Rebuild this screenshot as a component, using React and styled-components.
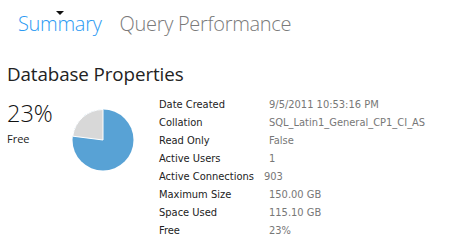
import React from "react";
import styled, { createGlobalStyle } from "styled-components";

const Global = createGlobalStyle`
  html, body { margin: 0; padding: 0; background: #fff; }
  body { font-family: "Open Sans", sans-serif; }
`;

const Page = styled.div`
  width: 476px;
  height: 242px;
  overflow: hidden;
  display: flex;
  flex-direction: column;
`;

const Tabs = styled.div`
  display: flex;
  gap: 18px;
  padding: 10px 0 0 18px;
  height: 38px;
  box-sizing: border-box;
`;

const Tab = styled.div`
  position: relative;
  font-family: "Open Sans", sans-serif;
  font-weight: 300;
  font-size: 20px;
  line-height: 28px;
  color: ${(p) => (p.$active ? "#2b9af3" : "#7a7a7a")};
  letter-spacing: -0.3px;
`;

const Caret = styled.span`
  position: absolute;
  top: 1px;
  left: 50%;
  transform: translateX(-50%);
  width: 0;
  height: 0;
  border-left: 4.5px solid transparent;
  border-right: 4.5px solid transparent;
  border-top: 4px solid #111;
`;

const Title = styled.h1`
  margin: 24px 0 0 7px;
  font-family: "Open Sans", sans-serif;
  font-weight: 400;
  font-size: 18.8px;
  line-height: 24px;
  color: #222;
  letter-spacing: -0.1px;
`;

const Body = styled.div`
  display: flex;
  margin-top: 9px;
  padding-left: 7px;
`;

const Stat = styled.div`
  width: 64px;
  padding-top: 5px;
  display: flex;
  flex-direction: column;
`;

const Big = styled.div`
  font-family: "Open Sans", sans-serif;
  font-weight: 300;
  font-size: 23.5px;
  line-height: 26px;
  color: #111;
`;

const Small = styled.div`
  font-family: "Open Sans", sans-serif;
  font-size: 11px;
  line-height: 14px;
  margin-top: 6px;
  color: #222;
`;

const PieBox = styled.div`
  width: 88px;
  padding-top: 13.5px;
  padding-left: 1px;
  box-sizing: border-box;
  svg { display: block; }
`;

const Table = styled.div`
  display: grid;
  grid-template-columns: 110px auto;
  grid-auto-rows: 18px;
  font-family: "DejaVu Sans Condensed", "DejaVu Sans", sans-serif;
  font-stretch: condensed;
  font-size: 11px;
  align-items: center;
`;

const Label = styled.div`
  color: #222;
  white-space: nowrap;
`;

const Value = styled.div`
  color: #777;
  white-space: nowrap;
  margin-left: ${(p) => (p.$shift ? "-5px" : "0")};
`;

function Pie({ pct }) {
  const r = 30.5;
  const cx = 31, cy = 31;
  const a = (pct / 100) * 2 * Math.PI;
  const x = cx - r * Math.sin(a);
  const y = cy - r * Math.cos(a);
  return (
    <svg width="62" height="62" viewBox="0 0 62 62">
      <circle cx={cx} cy={cy} r={r} fill="#58a2d5" />
      <path
        d={`M${cx} ${cy} L${cx} ${cy - r} A${r} ${r} 0 0 0 ${x} ${y} Z`}
        fill="#d8d8d8"
        stroke="#fff"
        strokeWidth="1"
      />
    </svg>
  );
}

const rows = [
  ["Date Created", "9/5/2011 10:53:16 PM"],
  ["Collation", "SQL_Latin1_General_CP1_CI_AS"],
  ["Read Only", "False"],
  ["Active Users", "1"],
  ["Active Connections", "903", true],
  ["Maximum Size", "150.00 GB"],
  ["Space Used", "115.10 GB"],
  ["Free", "23%"],
];

export default function App() {
  return (
    <Page>
      <Global />
      <Tabs>
        <Tab $active>
          <Caret />
          Summary
        </Tab>
        <Tab>Query Performance</Tab>
      </Tabs>
      <Title>Database Properties</Title>
      <Body>
        <Stat>
          <Big>23%</Big>
          <Small>Free</Small>
        </Stat>
        <PieBox>
          <Pie pct={23} />
        </PieBox>
        <Table>
          {rows.map(([l, v, s]) => (
            <React.Fragment key={l}>
              <Label>{l}</Label>
              <Value $shift={s}>{v}</Value>
            </React.Fragment>
          ))}
        </Table>
      </Body>
    </Page>
  );
}
